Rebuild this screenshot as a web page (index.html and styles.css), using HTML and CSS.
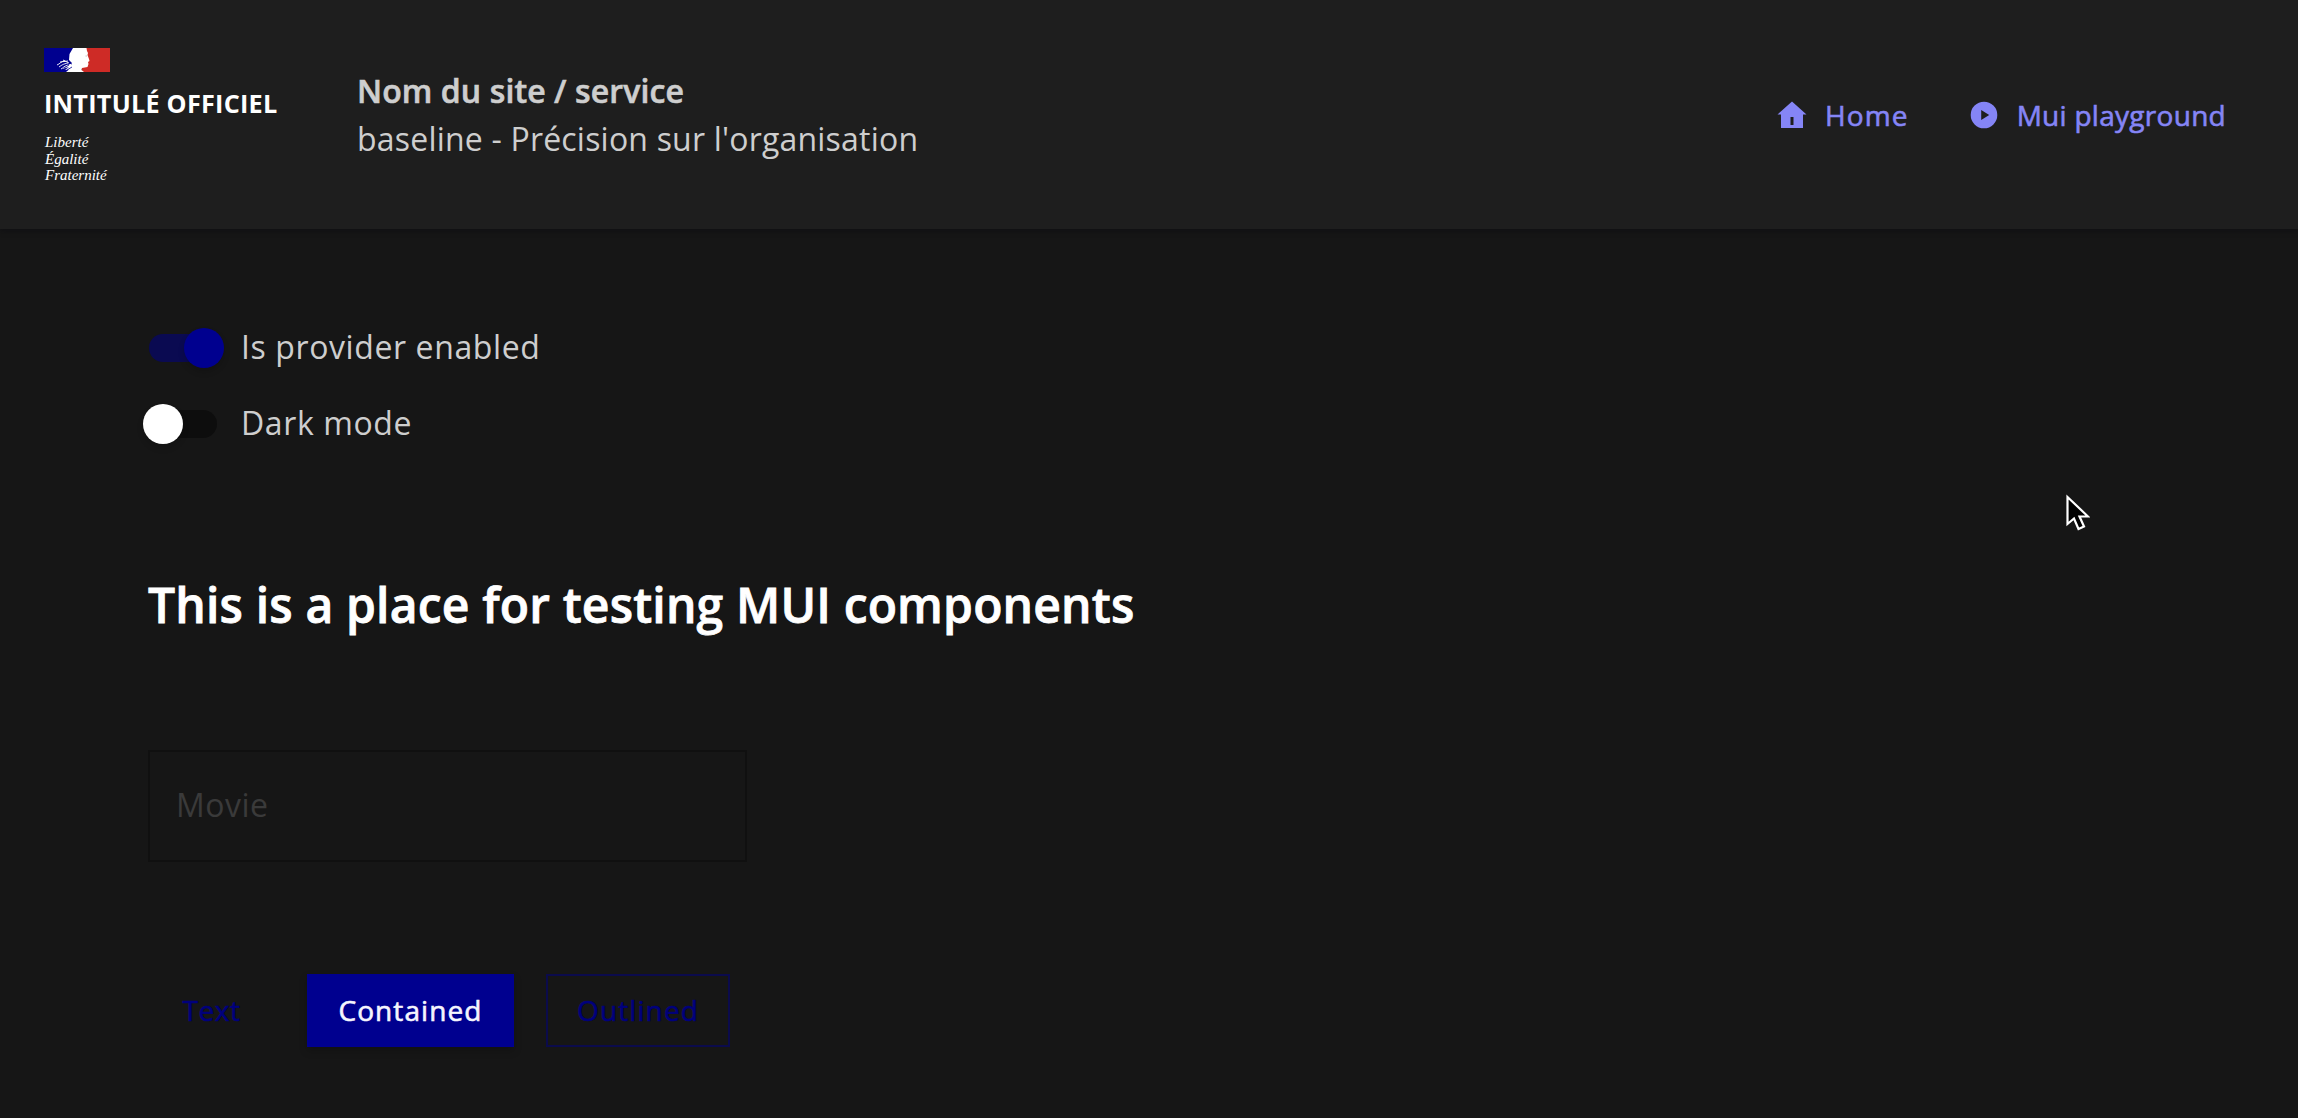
FILE: index.html
```html
<!DOCTYPE html>
<html lang="fr">
<head>
<meta charset="utf-8">
<title>Mui playground</title>
<link rel="stylesheet" href="styles.css">
</head>
<body>
<header class="header">
  <div class="brand">
    <svg class="flag" viewBox="0 0 66 24" aria-hidden="true">
      <path fill="#00008f" d="M0 0h31v24H0z"/>
      <path fill="#ce2b26" d="M38 0h28v24H38z"/>
      <path fill="#fff" d="M29 0H42.500L43 3 44 5 43.500 7 45 11 45.500 13 44 14 44.500 16 43.500 19 38 20 37.500 22 40 24H22L25 21.500 21 22 25 19 18 21 24 17 28 15 25 12 25.500 6Z"/>
      <path fill="none" stroke="#fff" stroke-width=".9" d="M13 17c3-1 4-4 8-4M15 19c3-2 4-3 9-4M16 14l8-1M17 21c2-1 3-3 7-4M19 12l6 3"/>
      <path fill="none" stroke="#00008f" stroke-width=".8" d="M20 20l5-3M23 22l5-3M25 15l3 1"/>
      <path fill="none" stroke="#aaa" stroke-width=".7" d="M41.500 8h1.500"/>
    </svg>
    <p class="brand-title">INTITULÉ OFFICIEL</p>
    <p class="motto">Liberté<br>Égalité<br>Fraternité</p>
  </div>
  <div class="service">
    <p class="service-title">Nom du site / service</p>
    <p class="service-tagline">baseline - Précision sur l'organisation</p>
  </div>
  <nav class="nav">
    <a class="nav-link"><svg class="icon" viewBox="0 0 32 32" aria-hidden="true"><path fill="currentColor" fill-rule="evenodd" d="M16 2.500 30.500 15.500H27V29H5V15.500H1.500ZM14.500 18v8h3v-8Z"/></svg><span class="nav-home">Home</span></a>
    <a class="nav-link"><svg class="icon" viewBox="0 0 32 32" aria-hidden="true"><path fill="currentColor" fill-rule="evenodd" d="M16 2.700a13.300 13.300 0 1 0 0 26.600 13.300 13.300 0 1 0 0-26.600ZM13.200 11v10l8-5Z"/></svg><span class="nav-mui">Mui playground</span></a>
  </nav>
</header>
<main class="main">
  <label class="switch-row"><span class="switch switch-on"><span class="thumb"></span></span><span class="switch-label">Is provider enabled</span></label>
  <label class="switch-row"><span class="switch"><span class="thumb"></span></span><span class="switch-label">Dark mode</span></label>
  <h2 class="heading">This is a place for testing MUI components</h2>
  <div class="field"><span class="field-label">Movie</span></div>
  <div class="buttons">
    <button class="btn btn-text">Text</button>
    <button class="btn btn-contained">Contained</button>
    <button class="btn btn-outlined">Outlined</button>
  </div>
</main>
<svg class="cursor" viewBox="0 0 24 38" aria-hidden="true"><path fill="#000" stroke="#fff" stroke-width="2.200" d="M1.500 3V30L8 24.500 12.500 35 18 32.500 13.500 22.500H22Z"/></svg>
</body>
</html>
```
FILE: styles.css
```css
* { box-sizing: border-box; }
body {
  margin: 0;
  height: 1118px;
  overflow: hidden;
  background: #161616;
  color: #cecece;
  font-family: "Open Sans", sans-serif;
  font-size: 32px;
  line-height: 48px;
}
p, h2 { margin: 0; }
.header {
  display: flex;
  align-items: center;
  height: 229px;
  padding: 0 72px 0 44px;
  background: #1e1e1e;
  box-shadow: 0 2px 6px rgba(0, 0, 12, .32);
}
.brand { width: 313px; height: 133px; }
.flag { display: block; width: 66px; height: 24px; }
.brand-title {
  margin-top: 17px;
  color: #fff;
  font-size: 25.2px;
  font-weight: 700;
  line-height: 28px;
  letter-spacing: .26px;
}
.motto {
  margin-top: 17px;
  padding-left: 1px;
  color: #fff;
  font: italic 15px/16.6px "Liberation Serif", serif;
}
.service-title {
  font-weight: 600;
  letter-spacing: .1px;
  -webkit-text-stroke: .6px currentColor;
}
.service-tagline { letter-spacing: .2px; }
.nav { display: flex; gap: 59px; margin-left: auto; }
.nav-link {
  display: flex;
  align-items: center;
  gap: 17px;
  color: #8585f6;
  font-size: 28px;
  -webkit-text-stroke: .6px currentColor;
}
.icon { width: 32px; height: 32px; }
.icon path { stroke: none; }
.nav-home { letter-spacing: 1.1px; }
.nav-mui { letter-spacing: .28px; }
.main { padding: 81px 148px 0; }
.switch-row { display: flex; align-items: center; height: 76px; }
.switch {
  display: flex;
  align-items: center;
  width: 68px;
  height: 28px;
  margin-left: 1px;
  border-radius: 14px;
  background: #0d0d0d;
}
.switch-on { background: #0a0a51; }
.thumb {
  width: 40px;
  height: 40px;
  flex: none;
  margin-left: -6px;
  border-radius: 50%;
  background: #fff;
  box-shadow: 0 4px 6px rgba(0, 0, 0, .16);
}
.switch-on .thumb { margin-left: 35px; background: #00008f; }
.switch-label {
  margin: 0 0 2px 24px;
  letter-spacing: .6px;
}
.heading {
  margin-top: 111px;
  color: #fff;
  font-size: 48px;
  font-weight: 600;
  line-height: 64px;
  letter-spacing: .17px;
  -webkit-text-stroke: .8px currentColor;
}
.field {
  display: flex;
  align-items: center;
  width: 599px;
  height: 112px;
  margin-top: 113px;
  padding: 0 0 3px 26px;
  border: 2px solid #101010;
  color: #3a3a3a;
}
.field-label { letter-spacing: .48px; }
.buttons { display: flex; gap: 32px; margin-top: 112px; }
.btn {
  height: 73px;
  padding: 0 0 2px;
  border: 0;
  background: none;
  color: #00007c;
  font: 28px "Open Sans", sans-serif;
  letter-spacing: 1.1px;
  -webkit-text-stroke: .6px currentColor;
}
.btn-text { width: 127px; letter-spacing: .57px; }
.btn-contained {
  width: 207px;
  background: #00008f;
  color: #f5f5fe;
  box-shadow: 0 4px 8px rgba(0, 0, 0, .2);
}
.btn-outlined { width: 184px; border: 2px solid #0b0b4c; }
.cursor {
  position: absolute;
  left: 2066px;
  top: 494px;
  width: 24px;
  height: 38px;
}
```
